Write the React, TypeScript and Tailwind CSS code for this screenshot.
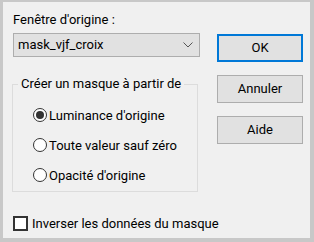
import React from 'react';

const font = { fontFamily: 'Roboto, "Segoe UI", sans-serif' };

function Radio({ label, checked }: { label: string; checked?: boolean }) {
  return (
    <label className="flex items-center h-[20px]">
      <span className="w-[14px] h-[14px] rounded-full border border-[#333333] bg-white flex items-center justify-center">
        {checked && <span className="w-[8px] h-[8px] rounded-full bg-[#333333]" />}
      </span>
      <span className="ml-[2px] text-[13px] text-black leading-none">{label}</span>
    </label>
  );
}

function Btn({ children, primary }: { children: React.ReactNode; primary?: boolean }) {
  return (
    <button
      className={`w-[86px] h-[28px] bg-[#e1e1e1] text-[13px] text-black ${
        primary ? 'border-2 border-[#0078d7]' : 'border border-[#adadad]'
      }`}
    >
      {children}
    </button>
  );
}

export default function App() {
  return (
    <div
      style={font}
      className="w-[314px] h-[242px] bg-[#f0f0f0] border-t-2 border-l-[3px] border-r-4 border-b-4 border-[#c8c8c8] flex flex-col"
    >
      <div className="flex pl-[9px] pt-[9px]">
        {/* Left column */}
        <div className="w-[188px] flex flex-col">
          <div className="text-[13px] text-black leading-[18px] pl-[1px]">Fenêtre d'origine :</div>
          <div className="mt-[4px] ml-[1px] h-[24px] w-[187px] bg-[#e1e1e1] border border-[#adadad] flex items-center justify-between pl-[4px] pr-[6px]">
            <span className="text-[13px] text-black">mask_vjf_croix</span>
            <svg width="10" height="6" viewBox="0 0 10 6" fill="none">
              <path d="M0.5 0.5 L5 5 L9.5 0.5" stroke="#555" strokeWidth="1" />
            </svg>
          </div>
          <fieldset className="mt-[20px] w-[186px] h-[115px] border border-[#dcdcdc]">
            <legend className="ml-[5px] px-[3px] text-[13px] text-black leading-[14px] whitespace-nowrap">
              Créer un masque à partir de
            </legend>
            <div className="flex flex-col gap-[10px] pl-[20px] pt-[14px]">
              <Radio label="Luminance d'origine" checked />
              <Radio label="Toute valeur sauf zéro" />
              <Radio label="Opacité d'origine" />
            </div>
          </fieldset>
        </div>
        {/* Buttons */}
        <div className="ml-[17px] pt-[23px] flex flex-col gap-[13px]">
          <Btn primary>OK</Btn>
          <Btn>Annuler</Btn>
          <Btn>Aide</Btn>
        </div>
      </div>
      <label className="mt-[24px] ml-[10px] flex items-center">
        <span className="w-[15px] h-[15px] border-2 border-[#333333] bg-white" />
        <span className="ml-[4px] text-[13px] text-black leading-none">Inverser les données du masque</span>
      </label>
    </div>
  );
}
